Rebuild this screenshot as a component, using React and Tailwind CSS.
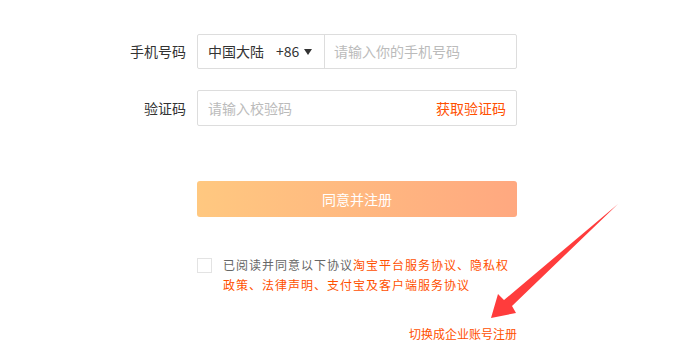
import React from "react";

const font = { fontFamily: '"Noto Sans CJK SC", "Noto Sans", sans-serif' };

const Arrow = () => (
  <svg
    className="absolute left-0 top-0 pointer-events-none"
    width="700"
    height="364"
    viewBox="0 0 700 364"
  >
    <polygon
      points="618,204 512,306 516,313 491,318 498,294 504,300"
      fill="#ff3c3c"
    />
  </svg>
);

export default function App() {
  return (
    <div className="relative w-[700px] h-[364px] bg-white overflow-hidden" style={font}>
      <div className="ml-[120px] w-[397px] pt-[34px]">
        {/* phone */}
        <div className="flex items-center gap-[11px]">
          <label className="w-[66px] text-right text-[14px] text-[#333]">手机号码</label>
          <div className="flex w-[320px] h-[35px] border border-[#ddd] rounded-[2px]">
            <div className="flex items-center w-[127px] border-r border-[#ddd] pl-[10px] text-[14px] text-[#333]">
              <span>中国大陆</span>
              <span className="ml-[12px]">+86</span>
              <span className="ml-[5px] w-0 h-0 border-l-[4px] border-r-[4px] border-t-[6px] border-l-transparent border-r-transparent border-t-[#333]"></span>
            </div>
            <input
              className="flex-1 min-w-0 px-[9px] text-[14px] text-[#333] placeholder:text-[#bbb] outline-none"
              placeholder="请输入你的手机号码"
            />
          </div>
        </div>

        {/* code */}
        <div className="flex items-center gap-[11px] mt-[21px]">
          <label className="w-[66px] text-right text-[14px] text-[#333]">验证码</label>
          <div className="flex items-center w-[320px] h-[36px] border border-[#ddd] rounded-[2px]">
            <input
              className="flex-1 min-w-0 pl-[10px] text-[14px] text-[#333] placeholder:text-[#bbb] outline-none"
              placeholder="请输入校验码"
            />
            <span className="pr-[10px] text-[14px] text-[#ff5000] cursor-pointer">获取验证码</span>
          </div>
        </div>

        {/* submit */}
        <div className="ml-[77px] mt-[55px]">
          <button className="w-[320px] h-[36px] rounded-[3px] bg-gradient-to-r from-[#ffc880] to-[#ffa880] text-white text-[14px]">
            同意并注册
          </button>

          <div className="flex mt-[40px]">
            <span className="mt-[1px] w-[15px] h-[15px] border border-[#e3e3e3] shrink-0"></span>
            <div className="ml-[11px] -mt-[2px] text-[12px] leading-[20px] tracking-[1px]">
              <div>
                <span className="text-[#666]">已阅读并同意以下协议</span>
                <span className="text-[#ff5000]">淘宝平台服务协议、隐私权</span>
              </div>
              <div className="text-[#ff5000]">政策、法律声明、支付宝及客户端服务协议</div>
            </div>
          </div>

          <div className="mt-[30px] text-right text-[12px] leading-[18px] text-[#ff5000]">
            切换成企业账号注册
          </div>
        </div>
      </div>
      <Arrow />
    </div>
  );
}
